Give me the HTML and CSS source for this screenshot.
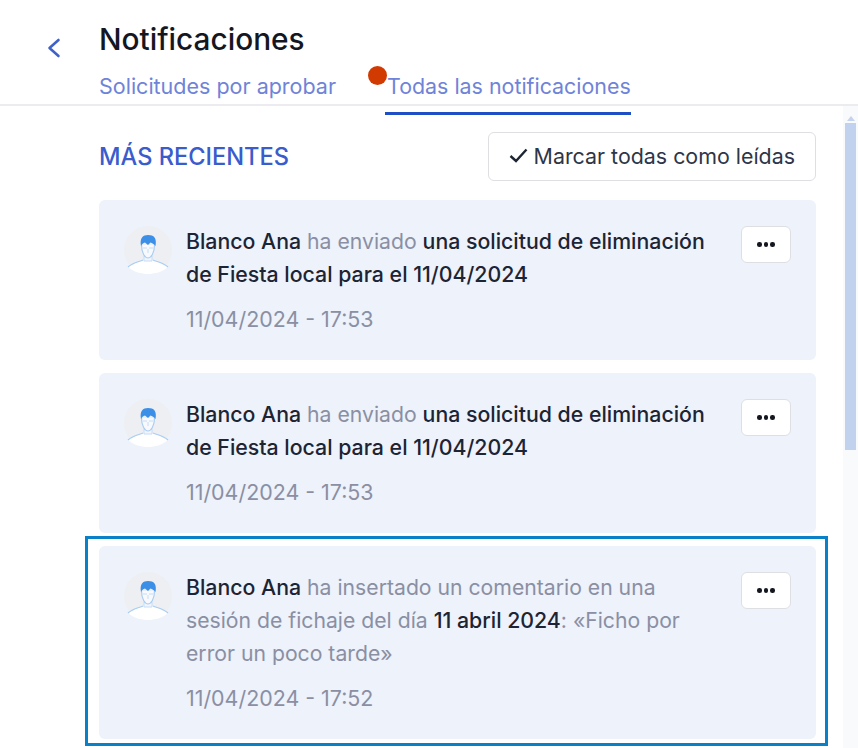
FILE: index.html
```html
<!DOCTYPE html>
<html lang="es">
  <head>
    <meta charset="UTF-8" />
    <title>Notificaciones</title>
    <link rel="stylesheet" href="styles.css">
  </head>
  <body>
    <header class="top">
      <svg class="back" width="14" height="20" viewBox="0 0 14 20">
        <path d="M11.5 2 L2.5 10 L11.5 18" fill="none" stroke="#3f62c8" stroke-width="2.6" stroke-linecap="round" stroke-linejoin="round" />
      </svg>
      <div class="top-text">
        <h1>Notificaciones</h1>
        <nav class="tabs">
          <a class="tab">Solicitudes por aprobar</a>
          <a class="tab active"><span class="dot"></span>Todas las notificaciones</a>
        </nav>
      </div>
    </header>

    <div class="body-row">
      <main class="content">
        <div class="list-head">
          <h2>MÁS RECIENTES</h2>
          <button class="mark-read">
            <svg width="19" height="15" viewBox="0 0 19 15">
              <path d="M1.5 8 L7 13 L17.5 1.5" fill="none" stroke="#1d2433" stroke-width="2.4" />
            </svg>
            Marcar todas como leídas
          </button>
        </div>

        <article class="card">
          <svg class="avatar" viewBox="0 0 48 48">
            <use href="#person" />
          </svg>
          <div class="card-text">
            <p><b>Blanco Ana</b> ha enviado <b>una solicitud de eliminación de Fiesta local para el 11/04/2024</b></p>
            <time>11/04/2024 - 17:53</time>
          </div>
          <button class="more"><i></i><i></i><i></i></button>
        </article>

        <article class="card">
          <svg class="avatar" viewBox="0 0 48 48">
            <use href="#person" />
          </svg>
          <div class="card-text">
            <p><b>Blanco Ana</b> ha enviado <b>una solicitud de eliminación de Fiesta local para el 11/04/2024</b></p>
            <time>11/04/2024 - 17:53</time>
          </div>
          <button class="more"><i></i><i></i><i></i></button>
        </article>

        <article class="card selected">
          <svg class="avatar" viewBox="0 0 48 48">
            <use href="#person" />
          </svg>
          <div class="card-text">
            <p><b>Blanco Ana</b> ha insertado un comentario en una sesión de fichaje del día <b>11 abril 2024</b>: «Ficho por error un poco tarde»</p>
            <time>11/04/2024 - 17:52</time>
          </div>
          <button class="more"><i></i><i></i><i></i></button>
        </article>
      </main>

      <div class="scrollbar">
        <span class="arrow"></span>
        <span class="thumb"></span>
      </div>
    </div>

    <svg width="0" height="0" class="defs">
      <symbol id="person" viewBox="0 0 48 48">
        <circle cx="24" cy="24" r="24" fill="#eeeff2" />
        <path d="M4 41 C8 37 14 36 19 34 L29 34 C34 36 40 37 44 41 C38 46 31 48 24 48 C17 48 10 46 4 41 Z" fill="#fff" />
        <path d="M4 41 C8 37 14 36 19 34 M29 34 C34 36 40 37 44 41" fill="none" stroke="#a9cdf3" stroke-width="1.2" />
        <path d="M20 30 L20 35 L28 35 L28 30 Z" fill="#f2f6fc" stroke="#c4dcf6" stroke-width="1" />
        <path d="M17.500 19 C17.500 27 21 32 24 32 C27 32 30.500 27 30.500 19" fill="#f7f9fc" stroke="#a9cdf3" stroke-width="1.2" />
        <path d="M19 22 L23 22 M25 22 L29 22 M24 23 L24 27" fill="none" stroke="#c4dcf6" stroke-width="1" />
        <path d="M17 20 C15.500 12 19 9 24 9 C30 9 33 12 31.500 20 C30 18 28 17 26.500 16.500 L24 19 L21 16.500 C19 17 18 18 17 20 Z" fill="#3b8fe6" />
      </symbol>
    </svg>
  </body>
</html>
```

FILE: styles.css
```css
* {
  box-sizing: border-box;
  font-family: Inter, "Liberation Sans", sans-serif;
}

html,
body {
  height: 100%;
}

body {
  margin: 0;
  background-color: white;
  color: #1d2433;
  display: flex;
  flex-direction: column;
  overflow: hidden;
}

.defs {
  position: absolute;
}

.top {
  display: flex;
  height: 106px;
  flex-shrink: 0;
  padding-left: 47px;
  border-bottom: 2px solid #ebebf0;
}

.back {
  margin-top: 38px;
  flex-shrink: 0;
}

.top-text {
  margin-left: 38px;
  padding-top: 21px;
}

h1 {
  margin: 0;
  font-size: 29.8px;
  line-height: 36px;
  font-weight: 500;
  color: #14171f;
}

.tabs {
  display: flex;
  gap: 51px;
  margin-top: 15px;
}

.tab {
  position: relative;
  font-size: 21.5px;
  line-height: 28px;
  color: #6f83d8;
}

.tab.active {
  font-size: 21.4px;
}

.tab.active::after {
  content: "";
  position: absolute;
  left: -2px;
  right: 0;
  top: 40px;
  height: 3px;
  background: #1f4fc4;
}

.dot {
  position: absolute;
  left: -19px;
  top: -6px;
  width: 19px;
  height: 19px;
  border-radius: 50%;
  background: #d13a00;
}

.body-row {
  flex: 1;
  display: flex;
  min-height: 0;
}

.content {
  flex: 1;
  padding: 26px 0 0 99px;
  margin-right: 27px;
}

.list-head {
  display: flex;
  justify-content: space-between;
  align-items: center;
  height: 49px;
  margin-bottom: 19px;
}

h2 {
  margin: 0;
  font-size: 23.6px;
  font-weight: 500;
  color: #3a5ccc;
}

.mark-read {
  display: flex;
  align-items: center;
  gap: 6px;
  height: 49px;
  padding: 0 20px 2px;
  background: white;
  border: 1.5px solid #dedfe3;
  border-radius: 6px;
  font-size: 21.4px;
  color: #2d3648;
}

.card {
  position: relative;
  display: flex;
  align-items: flex-start;
  padding: 26px 25px 24px;
  margin-bottom: 13.5px;
  background: #edf2fb;
  border-radius: 6px;
}

.selected::after {
  content: "";
  position: absolute;
  left: -14px;
  right: -12px;
  top: -10px;
  bottom: -7px;
  border: 3px solid #0a80c8;
}

.avatar {
  width: 48px;
  height: 48px;
  flex-shrink: 0;
}

.card-text {
  width: 530px;
  margin: -1px 0 0 14px;
  font-size: 21.2px;
  line-height: 33px;
  color: #8a8fa3;
}

.card-text p {
  margin: 0 0 11.5px;
}

.card-text b {
  font-size: 21.3px;
  font-weight: 500;
  color: #1d2433;
}

time {
  display: block;
  font-size: 21.4px;
}

.more {
  display: flex;
  align-items: center;
  justify-content: center;
  gap: 2px;
  width: 50px;
  height: 37px;
  margin-left: auto;
  padding: 0;
  background: white;
  border: 1.5px solid #dedfe3;
  border-radius: 6px;
}

.more i {
  width: 4.5px;
  height: 4.5px;
  border-radius: 50%;
  background: #14171f;
}

.scrollbar {
  width: 15px;
  flex-shrink: 0;
  background: #f9fafc;
  padding: 10px 2px 0;
}

.arrow {
  display: block;
  width: 0;
  margin: 0 auto 2px;
  border: 4px solid transparent;
  border-top: 0;
  border-bottom: 5px solid #c5d3ee;
}

.thumb {
  display: block;
  height: 327px;
  background: #c1d2ee;
}
```
